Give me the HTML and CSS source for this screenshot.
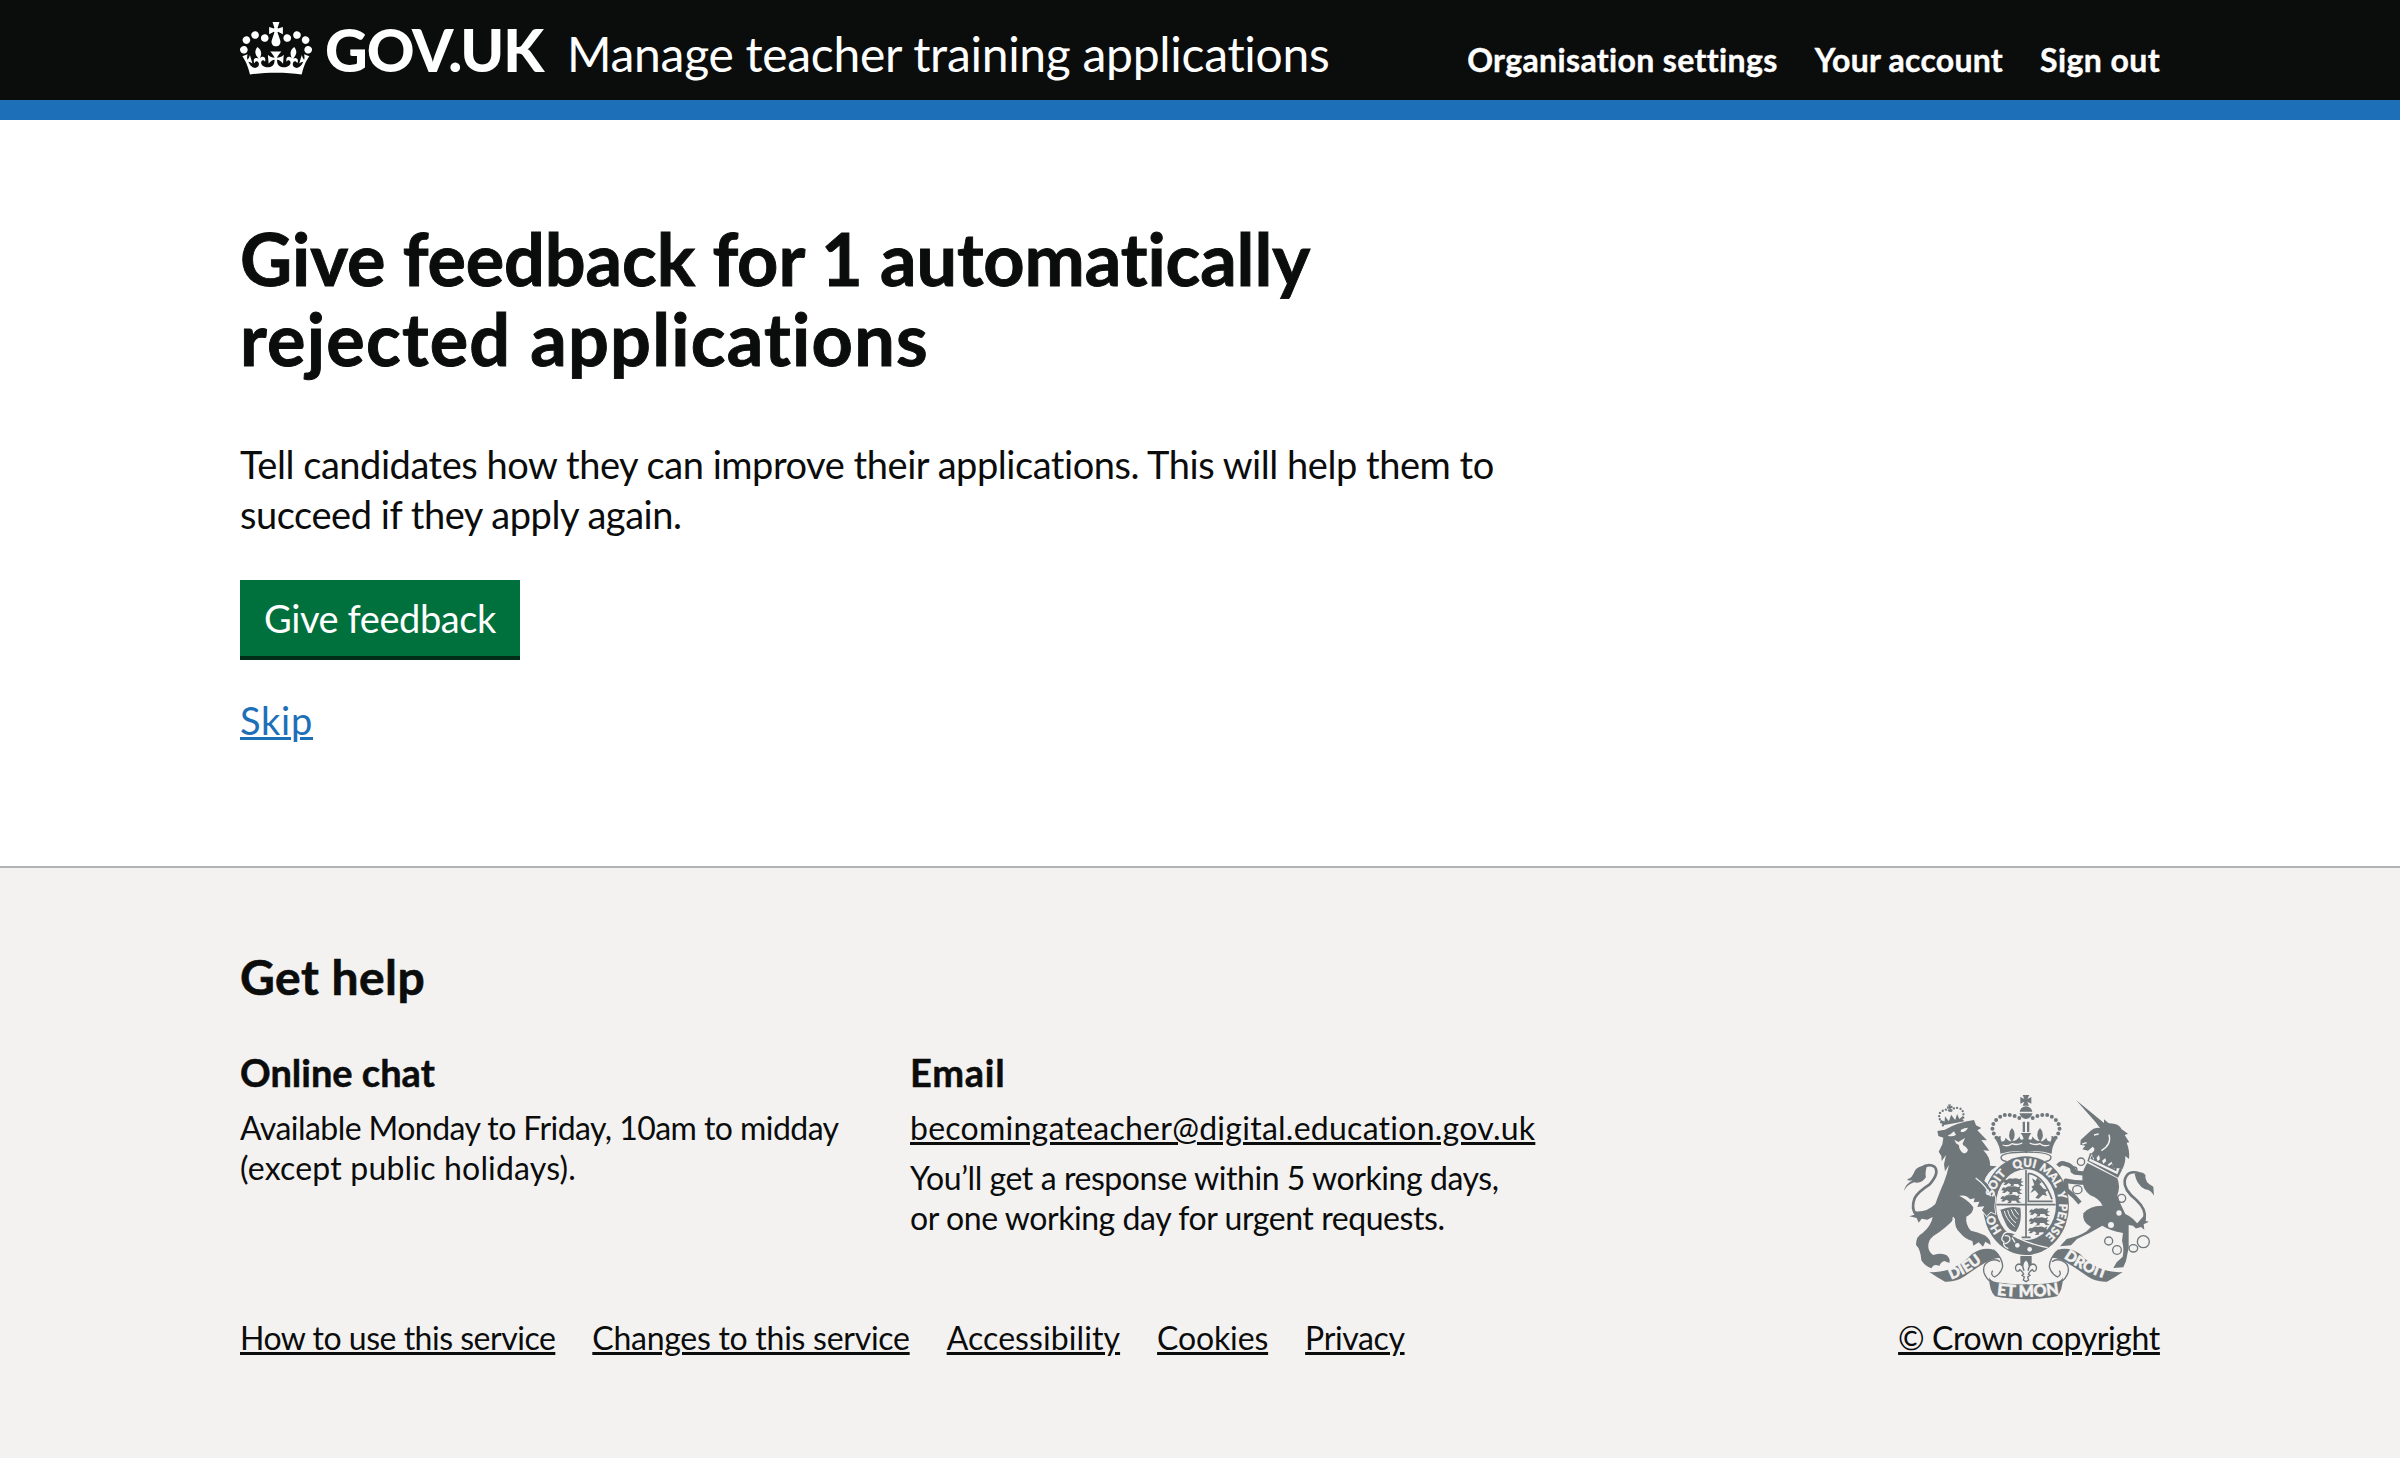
FILE: index.html
```html
<!DOCTYPE html>
<html lang="en">
<head>
<meta charset="utf-8">
<title>Give feedback - Manage teacher training applications - GOV.UK</title>
<link rel="stylesheet" href="styles.css">
</head>
<body>
<header class="header">
  <div class="container header-row">
    <a class="logo" href="#">
      <svg class="logo-crown" viewBox="0 0 132 97" preserveAspectRatio="none" aria-hidden="true"><path fill="currentColor" fill-rule="evenodd" d="M25 30.2c3.5 1.5 7.7-.2 9.1-3.7 1.5-3.6-.2-7.8-3.9-9.2-3.6-1.4-7.6.3-9.1 3.9-1.4 3.5.3 7.5 3.9 9zM9 39.5c3.6 1.5 7.8-.2 9.2-3.7 1.5-3.6-.2-7.8-3.9-9.1-3.6-1.5-7.6.2-9.1 3.8-1.4 3.5.3 7.5 3.8 9zM4.4 57.2c3.5 1.5 7.7-.2 9.1-3.8 1.5-3.6-.2-7.7-3.9-9.1-3.5-1.5-7.6.3-9.1 3.8-1.4 3.5.3 7.6 3.9 9.1zm38.3-21.4c3.5 1.5 7.7-.2 9.1-3.8 1.5-3.6-.2-7.7-3.9-9.1-3.6-1.5-7.6.3-9.1 3.8-1.3 3.6.4 7.7 3.9 9.1zm64.4-5.6c-3.6 1.5-7.8-.2-9.1-3.7-1.5-3.6.2-7.8 3.8-9.2 3.6-1.4 7.7.3 9.2 3.9 1.3 3.5-.4 7.5-3.9 9zm15.9 9.3c-3.6 1.5-7.7-.2-9.1-3.7-1.5-3.6.2-7.8 3.7-9.1 3.6-1.5 7.7.2 9.2 3.8 1.5 3.5-.3 7.5-3.8 9zm4.7 17.7c-3.6 1.5-7.8-.2-9.2-3.8-1.5-3.6.2-7.7 3.9-9.1 3.6-1.5 7.7.3 9.2 3.8 1.3 3.5-.4 7.6-3.9 9.1zM89.3 35.8c-3.6 1.5-7.8-.2-9.2-3.8-1.4-3.6.2-7.7 3.9-9.1 3.6-1.5 7.7.3 9.2 3.8 1.4 3.6-.3 7.7-3.9 9.1zM69.7 17.7l8.9 4.7V9.3l-8.9 2.8c-.2-.3-.5-.6-.9-.9L72.4 0H59.6l3.5 11.2c-.3.3-.6.5-.9.9l-8.8-2.8v13.1l8.8-4.7c.3.3.6.7.9.9l-5 15.4v.1c-.2.8-.4 1.6-.4 2.4 0 4.1 3.1 7.5 7 8.1h.2c.3 0 .7.1 1 .1.4 0 .7 0 1-.1h.2c4-.6 7.1-4.1 7.1-8.1 0-.8-.1-1.7-.4-2.4V34l-5.1-15.4c.4-.2.7-.6 1-.9zM66 92.8c16.9 0 32.8 1.1 47.1 3.2 4-16.9 8.9-26.7 14-33.5l-9.6-3.4c1 4.9 1.1 7.2 0 10.2-1.5-1.4-3-4.3-4.2-8.7L108.6 76c2.8-2 5-3.2 7.5-3.3-4.4 9.4-10 11.9-13.6 11.2-4.3-.8-6.3-4.6-5.6-7.9 1-4.7 5.7-5.9 8-.5 4.3-8.7-3-11.4-7.6-8.8 7.1-7.2 7.9-13.5 2.1-21.1-8 6.1-8.1 12.3-4.5 20.8-4.7-5.4-12.1-2.5-9.5 6.2 3.4-5.2 7.9-2 7.2 3.1-.6 4.3-6.4 7.8-13.5 7.2-10.3-.9-10.9-8-11.2-13.8 2.5-.5 7.1 1.8 11 7.3L80.2 60c-4.1 4.4-8 5.3-12.3 5.4 1.4-4.4 8-11.6 8-11.6H55.5s6.4 7.2 7.9 11.6c-4.2-.1-8-1-12.3-5.4l1.4 16.4c3.9-5.5 8.5-7.7 10.9-7.3-.3 5.8-.9 12.8-11.1 13.8-7.2.6-12.9-2.9-13.5-7.2-.7-5 3.8-8.3 7.1-3.1 2.7-8.7-4.6-11.6-9.4-6.2 3.7-8.5 3.6-14.7-4.6-20.8-5.8 7.6-5 13.9 2.2 21.1-4.7-2.6-11.9.1-7.7 8.8 2.3-5.5 7.1-4.2 8.1.5.7 3.3-1.3 7.1-5.7 7.9-3.5.7-9-1.8-13.5-11.2 2.5.1 4.7 1.3 7.5 3.3l-4.7-15.4c-1.2 4.4-2.7 7.2-4.3 8.7-1.1-3-.9-5.3 0-10.2l-9.5 3.4c5 6.9 9.9 16.7 14 33.5 14.8-2.1 30.8-3.2 47.7-3.2z"/></svg>
      <span class="logo-text">GOV.UK</span>
    </a>
    <a class="service" href="#">Manage teacher training applications</a>
    <nav class="nav">
      <a class="nav-org" href="#">Organisation settings</a>
      <a class="nav-account" href="#">Your account</a>
      <a class="nav-out" href="#">Sign out</a>
    </nav>
  </div>
</header>

<main class="container main">
  <h1 class="title">Give feedback for 1 automatically <span class="title-end">rejected applications</span></h1>
  <p class="lead">Tell candidates how they can improve their applications. This will help them to succeed if they apply again.</p>
  <a class="button" href="#">Give feedback</a>
  <p class="skip"><a href="#">Skip</a></p>
</main>

<footer class="footer">
  <div class="container footer-row">
    <div class="footer-main">
      <h2 class="help-title">Get help</h2>
      <div class="help">
        <section>
          <h3 class="help-heading">Online chat</h3>
          <p class="help-text chat">Available Monday to Friday, 10am to midday <span class="chat-end">(except public holidays).</span></p>
        </section>
        <section>
          <h3 class="help-heading email-heading">Email</h3>
          <p class="help-text mail"><a href="#">becomingateacher@digital.education.gov.uk</a></p>
          <p class="help-text reply">You’ll get a response within 5 working days, or one working day for urgent requests.</p>
        </section>
      </div>
      <nav class="links">
        <a class="l1" href="#">How to use this service</a>
        <a class="l2" href="#">Changes to this service</a>
        <a class="l3" href="#">Accessibility</a>
        <a class="l4" href="#">Cookies</a>
        <a class="l5" href="#">Privacy</a>
      </nav>
    </div>
    <div class="copyright">
      <svg class="arms" viewBox="42 36 750 624" aria-hidden="true">
        <defs>
          <path id="belt" d="M408 486a99 114 0 0 1 0-228a99 114 0 0 1 0 228"/>
          <path id="scroll-l" d="M184 596Q234 577 286 535"/>
          <path id="scroll-r" d="M521 530Q574 570 646 593"/>
          <path id="scroll-c" d="M320 642Q408 654 500 640"/>
          <g id="beast"><path class="g" d="M2 10q4-8 10-3q8-8 16-4q12-4 22 2l8-4l-3 9l8 2l-9 4q2 6 10 8l-12 2l-6-7h-12l-2 7l-12 1l6-6l-8-5l-8 6l-8-1l6-6l-8-1z"/></g>
        </defs>

        <!-- crown above the shield -->
        <path class="g" d="M398 42h20l-6 12l12-6v20l-12-6l5 12h-19l5-12l-12 6v-20l12 6zM389 92q4-15 19-16q15 1 19 16zM388 97h40q-7 17-20 17t-20-17zM398 122h7v31h-7zM411 122h7v31h-7zM405 158h6v58h-6z"/>
        <g id="crown-half">
          <path class="b-dots" d="M388 111Q350 92 325 111Q302 128 309 154L320 172"/>
          <path class="g" d="M318 178q6-14 14-13q-2 12 3 17q12-2 11-12q12 12 18 11q-9-12-6-22q0-10 8-18q8 8 8 19q1 12-7 20q14 0 22-14q0 15 12 8q-1-8-9-18h16v56q-40-6-77 6q-1-22-13-40z"/>
          <path class="bs" stroke-width="4" d="M338 192q15 6 28-4q14 6 31-2"/>
          <path class="s" stroke-width="4" d="M408 213Q334 214 333 229Q334 240 350 241"/>
        </g>
        <use href="#crown-half" transform="matrix(-1 0 0 1 816 0)"/>

        <!-- garter and shield -->
        <ellipse class="g" cx="408" cy="374" rx="129" ry="148"/>
        <ellipse class="b" cx="408" cy="371" rx="90" ry="106"/>
        <path class="s" stroke-width="5" d="M319 371H497M408 267V470M395 469H422M415 277V361H488M415 277Q460 281 486 355"/>
        <use href="#beast" x="338" y="290"/><use href="#beast" x="334" y="314"/><use href="#beast" x="331" y="340"/>
        <use href="#beast" x="417" y="380"/><use href="#beast" x="416" y="407"/><use href="#beast" x="414" y="435"/>
        <path class="g" d="M426 292l11 7l5-9l13 14l-7 5l13 14l15 4l-10 6l5 12l-13-4l-12 12l-10-2l9-12l-10-11l-14 8l8-13l-5-6l9-5zM331 386q22-8 38-8l22 2q4 30-2 48q-4 15-12 25q-22-3-32-30q-9-18-14-37z"/>
        <path class="bs" stroke-width="3" d="M343 390Q347 413 374 437M353 387Q357 410 378 426M363 385Q369 404 382 414M373 384L386 401"/>
        <path class="bs" stroke-width="4" d="M379 469Q425 491 473 500"/>
        <path class="g" d="M345 457q17-7 31 2l-12 7q14 12-2 22l8 13l-22-1q-18-14-10-23z"/>
        <path class="bs" stroke-width="4" d="M377 459Q344 444 338 466Q331 476 342 483Q337 496 355 503M344 464q16-2 16 12q-5 11-16 12M366 470l9 14"/>
        <circle class="b" cx="382" cy="493" r="7"/><circle class="b" cx="419" cy="505" r="7"/>

        <!-- lion -->
        <g transform="rotate(-10 185 110)">
          <path class="b-dots small" d="M155 128Q140 92 160 86Q175 78 185 92Q196 78 211 86Q230 92 215 128"/>
          <path class="g" d="M180 70h10l-3 6l6-2v9l-6-2l2 11h-8l2-11l-6 2v-9l6 2zM155 128l-5-18l12 8l4-16l9 17l10-18l9 18l9-17l4 16l13-8l-5 18z"/>
        </g>
        <path class="go" d="M142 150L165 146Q200 125 252 117L258 133L274 141L262 148L291 178L274 177L298 209L280 208Q302 230 300 254L320 256Q290 275 283 300Q302 315 316 350L313 378L316 398L302 392L290 405L276 388L283 376L262 378L268 362L251 364L254 352L240 355Q230 340 208 344Q239 361 250 379Q250 397 229 407Q226 432 243 449Q262 453 284 463Q302 474 302 492L286 482L279 497L266 484L250 494L247 480Q225 474 210 455Q192 440 195 410Q170 440 130 465Q112 480 115 500Q118 515 130 522Q156 514 170 523Q182 533 178 546L163 540Q152 543 148 555Q132 546 124 562Q105 556 94 538Q92 505 78 492Q78 465 98 456Q124 434 128 408L112 416L95 413L86 425L80 411L58 406L78 400L68 390Q108 397 136 369Q150 330 161 306Q172 278 177 252L165 271L162 250L168 222L155 240L154 225L146 212L157 190L160 170L145 165Z"/>
        <path class="b" d="M173 164q12 5 25-2l-6-11q-10 10-19 13zM212 153q14 2 22-13q-10 0-21 6zM193 176l12 7l20-12l-4 10q-5 6-2 11q10 5 15 14q-4 13-15 10q-13-10-12-23l-9-6z"/>
        <path class="bs" stroke-width="4" d="M257 291Q291 316 302 346M190 408Q186 430 199 446"/>
        <path class="s" stroke-width="8" d="M91 413Q59 392 74 352Q82 334 119 310Q150 275 133 257Q116 246 93 261"/>
        <path class="g" d="M42 330Q46 309 68 298Q50 300 53 294Q67 290 73 272Q79 256 112 252Q104 276 108 288Q96 309 72 304Q51 311 42 330z"/>

        <g class="motto">
          <text><textPath href="#belt" startOffset="12.5%">HO</textPath></text>
          <text text-anchor="middle"><textPath href="#belt" startOffset="34.5%">SOIT</textPath></text>
          <text text-anchor="middle"><textPath href="#belt" startOffset="49.3%">QUI</textPath></text>
          <text text-anchor="middle"><textPath href="#belt" startOffset="61.5%">MAL</textPath></text>
          <text text-anchor="middle"><textPath href="#belt" startOffset="70.8%">Y</textPath></text>
          <text text-anchor="middle"><textPath href="#belt" startOffset="82.5%">PENSE</textPath></text>
        </g>

        <!-- unicorn -->
        <path class="g" d="M558 57L642 126L642 115L656 127Q687 126 695 145L714 158L704 162L718 184L710 185Q720 210 717 234L706 225Q707 248 696 266L603 218Q621 205 608 197L594 209L577 205L586 194L571 191L572 177Q589 161 602 149Q614 138 630 141L617 124Z"/>
        <path class="bs" stroke-width="4" d="M657 161Q666 190 634 209M612 162l14-3M577 189l13-4"/>
        <path class="g" d="M592 240L600 216L689 260L696 267L684 290Z"/>
        <path class="b" d="M597 239l7-20l10 17l13-14l5 21l14-12l5 21l14-10l5 19l19 1l-7 18z"/>
        <path class="g" d="M606 222l4 14l8-10l5 15l10-9l7 16l9-8l7 16l10-8l6 15l9-7l-2 15l-78-38z"/>
        <path class="g" d="M592 246L682 292Q692 317 682 343Q690 369 706 399Q735 412 747 437L716 432V500L708 540L700 559L670 561L680 544L698 527Q703 502 696 479L699 456Q660 449 637 434Q600 456 561 474L543 493L510 496L530 474Q566 467 590 451L603 438Q575 423 580 397Q600 373 638 374Q627 352 601 343Q575 324 577 287Q578 266 592 246Z"/>
        <path class="s" stroke-width="13" stroke-linejoin="round" d="M586 278L555 275Q545 251 526 249Q513 242 504 255M588 305Q552 305 527 299L530 327L553 347L570 366"/>
        <path class="s" stroke-width="8" d="M748 277Q711 265 704 299Q700 326 739 357Q771 387 763 414Q757 435 739 438L720 414"/>
        <path class="g" d="M734 279Q755 267 766 281Q763 304 790 317L792 344Q782 326 765 325Q740 312 734 279zM768 397l-1 23l10 2l-16 8l2 16l-14-11l-20 3l14-13z"/>
        <g class="ring">
          <circle cx="573" cy="242" r="11"/><circle cx="552" cy="267" r="9"/><ellipse cx="562" cy="326" rx="14" ry="12"/>
          <circle cx="695" cy="352" r="12"/><circle cx="656" cy="480" r="12"/><circle cx="681" cy="507" r="13"/>
          <ellipse cx="730" cy="502" rx="13" ry="11"/><circle cx="760" cy="482" r="18"/>
        </g>
        <circle class="b" cx="687" cy="396" r="8"/><circle class="b" cx="663" cy="432" r="9"/>

        <!-- scrolls -->
        <g id="scroll-half">
          <path class="g" d="M118 573Q190 578 246 519Q272 500 303 504Q323 508 330 530Q306 532 283 547Q257 562 224 586Q198 604 165 602Q142 590 118 573z"/>
          <path class="s" stroke-width="4" d="M310 506Q338 531 338 556Q334 577 314 588Q300 582 308 569M330 542Q318 532 301 539Q276 549 282 575Q289 594 303 602"/>
          <path class="g" d="M297 588Q300 600 320 604Q360 611 409 610V655Q350 654 315 646Q298 630 297 588z"/>
        </g>
        <use href="#scroll-half" transform="matrix(-1 0 0 1 816 0)"/>
        <g class="motto scroll-motto">
          <text><textPath href="#scroll-l">DIEU</textPath></text>
          <text><textPath href="#scroll-r">DROIT</textPath></text>
          <text class="scroll-centre"><textPath href="#scroll-c">ET MON</textPath></text>
        </g>
        <path class="g" d="M391 525h34v28h-34z"/>
        <path class="bfill" d="M408 535Q392 550 402 569Q399 549 386 549Q373 553 378 567Q384 576 389 566Q397 571 401 579L396 583L403 588L400 597L408 602L416 597L413 588L420 583L415 579Q419 571 427 566Q433 576 438 567Q443 553 430 549Q417 549 414 569Q424 550 408 535z"/>
      </svg>
      <a class="copyright-link" href="#">© Crown copyright</a>
    </div>
  </div>
</footer>
</body>
</html>
```
FILE: styles.css
```css
* { box-sizing: border-box; }

body {
  margin: 0;
  background: #fff;
  color: #0b0c0c;
  font-family: Lato, "Noto Sans", sans-serif;
  font-size: 32px;
  line-height: 40px;
}

h1, h2, h3, p { margin: 0; }

h1, h2, h3, .nav { -webkit-text-stroke: 0.013em currentColor; }

a {
  color: inherit;
  text-decoration-thickness: 3px;
  text-underline-offset: 2px;
}

.container {
  width: 1920px;
  margin: 0 auto;
}

/* Header */
.header {
  height: 120px;
  background: #0b0c0c;
  border-bottom: 20px solid #1d70b8;
  color: #fff;
}

.header a { text-decoration: none; white-space: nowrap; }

.header-row {
  display: flex;
  align-items: baseline;
  padding-top: 19px;
}

.logo {
  display: flex;
  align-items: baseline;
  width: 327px;
  line-height: 60px;
}

.logo-crown {
  flex: none;
  width: 72px;
  height: 53px;
  margin: 0 13px -3px 0;
  transform: translateY(3px);
}

.logo-text {
  font-size: 59px;
  font-weight: 900;
  letter-spacing: -0.018em;
}

.service {
  font-size: 48px;
  letter-spacing: -0.0062em;
}

.nav {
  display: flex;
  gap: 37px;
  margin-left: auto;
  font-weight: 700;
}

.nav-org { letter-spacing: 0.0113em; }
.nav-account { letter-spacing: 0.008em; }
.nav-out { letter-spacing: 0.013em; }

/* Main content */
.main {
  height: 746px;
  padding-top: 98px;
}

.title {
  width: 1260px;
  font-size: 72px;
  font-weight: 700;
  line-height: 80px;
  letter-spacing: -0.0015em;
}

.title-end {
  display: block;
  letter-spacing: 0.0172em;
}

.lead {
  width: 1268px;
  margin-top: 61px;
  font-size: 38px;
  line-height: 50px;
  letter-spacing: -0.012em;
}

.button {
  display: block;
  width: 280px;
  height: 80px;
  margin-top: 41px;
  padding-left: 24px;
  background: #00703c;
  border-bottom: 4px solid #002d18;
  color: #fff;
  font-size: 38px;
  line-height: 76px;
  letter-spacing: -0.011em;
  text-decoration: none;
  white-space: nowrap;
}

.skip {
  margin-top: 35px;
  color: #1d70b8;
  font-size: 38px;
  line-height: 50px;
  letter-spacing: 0.0196em;
}

/* Footer */
.footer {
  height: 592px;
  padding-top: 79px;
  background: #f3f2f1;
  border-top: 2px solid #b1b4b6;
}

.footer-row {
  display: flex;
  justify-content: space-between;
  align-items: flex-end;
}

.help-title {
  font-size: 48px;
  line-height: 60px;
  letter-spacing: 0.01em;
}

.help {
  display: grid;
  grid-template-columns: 670px 640px;
  margin-top: 40px;
}

.help-heading {
  margin-bottom: 11px;
  font-size: 38px;
  line-height: 50px;
}

.email-heading { letter-spacing: 0.02em; }

.chat { width: 612px; letter-spacing: -0.0173em; }
.chat-end { display: block; letter-spacing: 0.0059em; }
.mail { letter-spacing: 0.0081em; }
.reply { width: 612px; margin-top: 10px; letter-spacing: -0.0135em; }

.links {
  display: flex;
  gap: 37px;
  margin-top: 80px;
  white-space: nowrap;
}

.l1 { letter-spacing: -0.0153em; }
.l2 { letter-spacing: -0.0085em; }
.l3 { letter-spacing: 0.0027em; }
.l4 { letter-spacing: -0.0046em; }
.l5 { letter-spacing: -0.0118em; }

.copyright {
  display: flex;
  flex-direction: column;
  align-items: center;
  gap: 17px;
  width: 262px;
}

.copyright-link { letter-spacing: -0.012em; white-space: nowrap; }

/* Royal coat of arms */
.arms { width: 250px; height: 208px; }
.g { fill: #6f777b; }
.go { fill: #6f777b; stroke: #f3f2f1; stroke-width: 5; paint-order: stroke; }
.b { fill: #f3f2f1; }
.s { fill: none; stroke: #6f777b; }
.bs { fill: none; stroke: #f3f2f1; }
.bfill { fill: #f3f2f1; stroke: #6f777b; stroke-width: 4; }
.b-dots { fill: none; stroke: #6f777b; stroke-width: 12; stroke-linecap: round; stroke-dasharray: 0 15; }
.small { stroke-width: 7; stroke-dasharray: 0 10; }
.ring { fill: none; stroke: #6f777b; stroke-width: 4; }
.motto { fill: #f3f2f1; stroke: #f3f2f1; stroke-width: 1; font-size: 35px; font-weight: 900; }
.scroll-motto { font-size: 45px; stroke-width: 1.5; }
.scroll-centre { font-size: 48px; }
```
